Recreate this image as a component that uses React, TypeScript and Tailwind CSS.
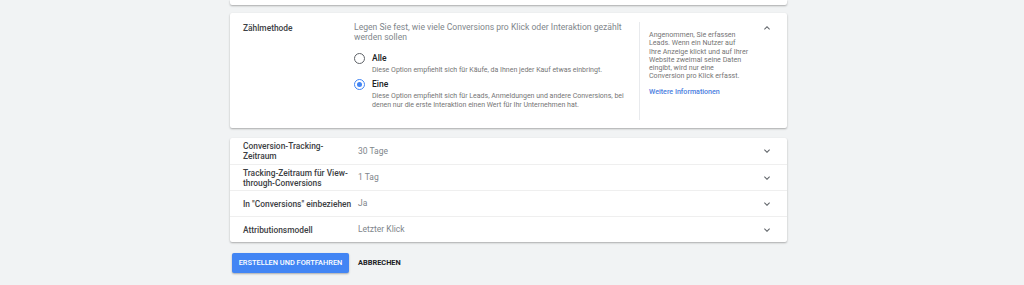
import React from 'react';

const rows = [
  { label: 'Conversion-Tracking-Zeitraum', value: '30 Tage' },
  { label: 'Tracking-Zeitraum für View-through-Conversions', value: '1 Tag' },
  { label: 'In "Conversions" einbeziehen', value: 'Ja' },
  { label: 'Attributionsmodell', value: 'Letzter Klick' },
];

const hint = [
  'Angenommen, Sie erfassen',
  'Leads. Wenn ein Nutzer auf',
  'Ihre Anzeige klickt und auf Ihrer',
  'Website zweimal seine Daten',
  'eingibt, wird nur eine',
  'Conversion pro Klick erfasst.',
];

const Chevron = ({ up = false }: { up?: boolean }) => (
  <svg viewBox="0 0 24 24" className="w-[12px] h-[12px] text-[#5f6368]" fill="currentColor">
    {up ? (
      <path d="M7.41 15.41 12 10.83l4.59 4.58L18 14l-6-6-6 6z" />
    ) : (
      <path d="M7.41 8.59 12 13.17l4.59-4.58L18 10l-6 6-6-6z" />
    )}
  </svg>
);

const Radio = ({ checked }: { checked: boolean }) => (
  <span
    className={`w-[11px] h-[11px] rounded-full border-[1.5px] flex items-center justify-center flex-shrink-0 ${
      checked ? 'border-[#4285f4]' : 'border-[#5f6368]'
    }`}
  >
    {checked && <span className="w-[5px] h-[5px] rounded-full bg-[#4285f4]" />}
  </span>
);

export default function App() {
  return (
    <div className="min-h-[285px] bg-[#f1f3f4] font-['Roboto',sans-serif] overflow-hidden">
      <div className="ml-[230px] w-[557px] flex flex-col">
        {/* Karte oben (abgeschnitten) */}
        <div className="h-[5px] bg-white rounded-b-[2px] shadow-[0_1px_2px_rgba(0,0,0,0.3)]" />

        {/* Zählmethode */}
        <div className="mt-[8px] h-[115px] bg-white rounded-[2px] shadow-[0_1px_2px_rgba(0,0,0,0.3)] flex pl-[13px] pt-[9px] pb-[8px]">
          <div className="w-[111px] flex-shrink-0 pt-[1px] text-[8.4px] leading-[10px] font-medium text-[#3c4043]">
            Zählmethode
          </div>
          <div className="w-[276px] flex-shrink-0">
            <p className="text-[8.6px] leading-[10px] text-[#80868b]">
              Legen Sie fest, wie viele Conversions pro Klick oder Interaktion gezählt werden sollen
            </p>
            <div className="mt-[11px] flex gap-[7px]">
              <Radio checked={false} />
              <div>
                <div className="text-[8.5px] leading-[11px] font-medium text-[#202124]">Alle</div>
                <div className="mt-[2px] text-[7px] leading-[9px] text-[#757575]">
                  Diese Option empfiehlt sich für Käufe, da Ihnen jeder Kauf etwas einbringt.
                </div>
              </div>
            </div>
            <div className="mt-[4px] flex gap-[7px]">
              <Radio checked />
              <div>
                <div className="text-[8.5px] leading-[11px] font-medium text-[#202124]">Eine</div>
                <div className="mt-[2px] text-[7px] leading-[9px] text-[#757575]">
                  Diese Option empfiehlt sich für Leads, Anmeldungen und andere Conversions, bei denen nur die erste Interaktion einen Wert für Ihr Unternehmen hat.
                </div>
              </div>
            </div>
          </div>
          <div className="ml-[9px] w-px bg-[#e8eaed]" />
          <div className="w-[111px] flex-shrink-0 pl-[9px] pt-[9px]">
            <p className="text-[7.1px] leading-[8.3px] text-[#757575]">
              {hint.map((line) => (
                <span key={line} className="block whitespace-nowrap">{line}</span>
              ))}
            </p>
            <p className="mt-[7px] text-[7.1px] leading-[8px] font-medium text-[#4a7de0]">Weitere Informationen</p>
          </div>
          <div className="flex-1 flex justify-end pr-[14px]">
            <Chevron up />
          </div>
        </div>

        {/* Weitere Einstellungen */}
        <div className="mt-[10px] bg-white rounded-[2px] shadow-[0_1px_2px_rgba(0,0,0,0.3)] flex flex-col">
          {rows.map((r, i) => (
            <div
              key={r.label}
              className={`h-[26px] flex items-center pl-[13px] ${i > 0 ? 'border-t border-[#efefef]' : ''}`}
            >
              <div className="w-[115px] flex-shrink-0 pr-[6px] text-[8.4px] leading-[10px] font-medium text-[#3c4043]">{r.label}</div>
              <div className="flex-1 text-[8.5px] text-[#80868b]">{r.value}</div>
              <div className="pr-[14px] flex">
                <Chevron />
              </div>
            </div>
          ))}
        </div>

        {/* Buttons */}
        <div className="mt-[11px] flex items-center gap-[9px]">
          <button className="ml-[2px] h-[20px] w-[117px] bg-[#4285f4] rounded-[2px] shadow-[0_1px_2px_rgba(0,0,0,0.3)] text-white text-[7.4px] font-medium uppercase">
            Erstellen und fortfahren
          </button>
          <button className="text-[7.4px] font-bold text-[#202124] uppercase">Abbrechen</button>
        </div>
      </div>
    </div>
  );
}
